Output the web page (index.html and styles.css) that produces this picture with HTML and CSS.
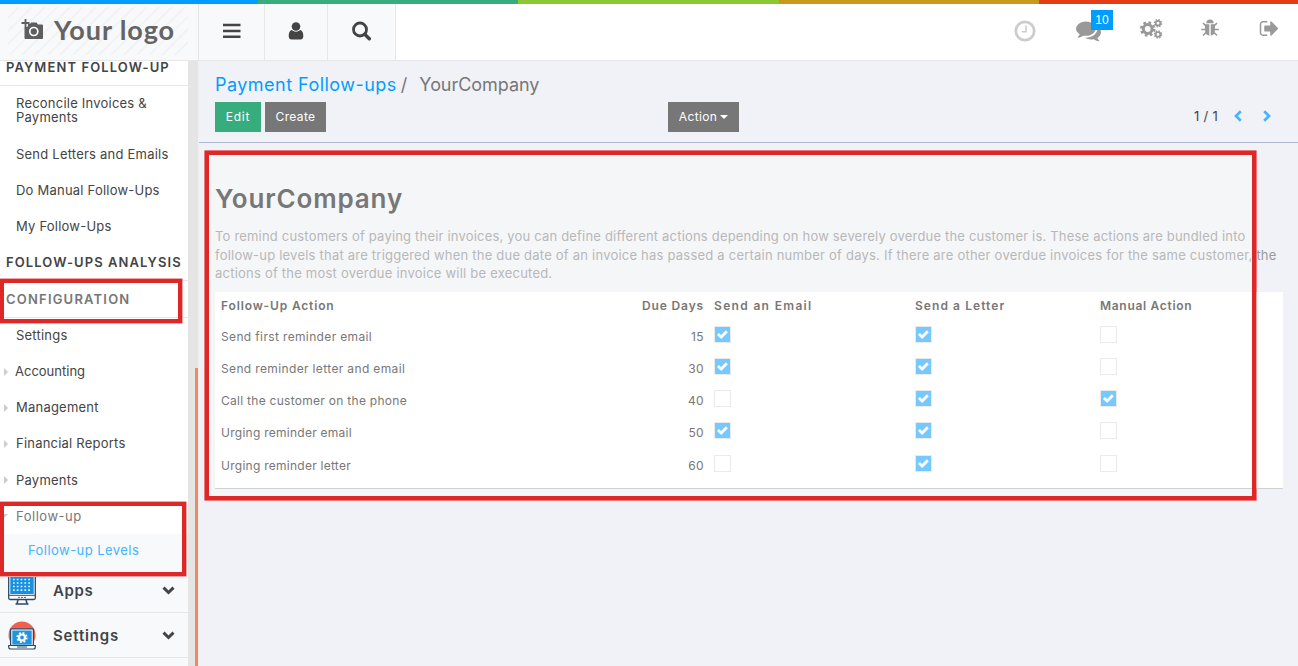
FILE: index.html
```
<!DOCTYPE html>
<html lang="en">
<head>
<meta charset="utf-8">
<title>Payment Follow-ups</title>
<link rel="stylesheet" href="styles.css">
</head>
<body>
<svg class="defs" width="0" height="0">
  <defs>
    <symbol id="chev" viewBox="0 0 13 9"><path d="M1.500 1.700 6.500 6.500l5-4.800" fill="none" stroke="#444" stroke-width="3"/></symbol>
    <symbol id="check" viewBox="0 0 15 15"><path d="M2.900 7 6.200 10.100 11.900 4.300" fill="none" stroke="#fff" stroke-width="2.800"/></symbol>
  </defs>
</svg>
<div class="stripe"><i class="s-blue"></i><i class="s-green"></i><i class="s-lime"></i><i class="s-gold"></i><i class="s-red"></i></div>
<header class="topbar">
  <div class="brand">
    <div class="logo">
      <svg width="23" height="22" viewBox="0 0 23 22"><path d="M3.500 8H6l1-1V5h2l1-1.500h5.500L17 5.500h4q1 0 1 1V19q0 1-1 1H4.500q-1 0-1-1z" fill="#5e5e5e"/><path d="M4.500 0v8M.5 4h8" stroke="#5e5e5e" stroke-width="1.800"/><circle cx="12.800" cy="12.500" r="4" fill="none" stroke="#fff" stroke-width="1.700"/></svg>
      <span>Your logo</span>
    </div>
  </div>
  <div class="tool t1"><svg width="18" height="16" viewBox="0 0 18 16"><path d="M0 2h17.500M0 8h17.500M0 13.700h17.500" stroke="#444" stroke-width="2.600"/></svg></div>
  <div class="tool t2"><svg width="16" height="18" viewBox="0 0 16 18"><circle cx="8" cy="4.500" r="4.300" fill="#444"/><path d="M3.700 8Q8 11.500 12.300 8q3 1 3 6 0 3.500-3 3.500H3.700q-3 0-3-3.500 0-5 3-6z" fill="#444"/></svg></div>
  <div class="tool t3"><svg width="20" height="20" viewBox="0 0 20 20"><circle cx="8" cy="8.500" r="6.500" fill="none" stroke="#444" stroke-width="2.800"/><path d="M12.700 13.200 17.300 17.800" stroke="#444" stroke-width="3.400" stroke-linecap="round"/></svg></div>
  <div class="systray">
    <svg class="i-clock" width="22" height="22" viewBox="0 0 22 22"><circle cx="11" cy="11" r="9.200" fill="none" stroke="#ccc" stroke-width="2.700"/><path d="M12 5.500v6.300H7.800" fill="none" stroke="#ccc" stroke-width="1.600"/></svg>
    <span class="chat">
      <svg width="25" height="25" viewBox="0 0 1792 1792"><path fill="#999" d="M1408 768q0 139-94 257t-256.500 186.500-353.500 68.500q-86 0-176-16-124 88-278 128-36 9-86 16h-3q-11 0-20.500-8t-11.500-21q-1-3-1-6.500t.5-6.500 2-6l2.500-5 3.500-5.500 4-5 4.500-5 4-4.500q5-6 23-25t26-29.500 22.500-29 25-38.500 20.500-44q-124-72-195-177t-71-224q0-139 94-257t256.500-186.500 353.500-68.500 353.500 68.500 256.500 186.500 94 257zm384 256q0 120-71 224.500t-195 176.500q10 24 20.500 44t25 38.500 22.500 29 26 29.500 23 25q1 1 4 4.500t4.500 5 4 5 3.500 5.500l2.500 5 2 6 .5 6.500-1 6.500q-3 14-13 22t-22 7q-50-7-86-16-154-40-278-128-90 16-176 16-271 0-472-132 58 4 88 4 161 0 309-45t264-129q125-92 192-212t67-254q0-77-23-152 129 71 204 178t75 230z"/></svg>
      <b class="badge">10</b>
    </span>
    <svg class="i-cogs" width="24" height="22" viewBox="0 0 24 22" fill="none" stroke="#999"><circle cx="7.700" cy="11" r="4.400" stroke-width="3"/><circle cx="7.700" cy="11" r="6.500" stroke-width="2.600" stroke-dasharray="2.600 2.505"/><circle cx="18" cy="5.200" r="2.300" stroke-width="1.800"/><circle cx="18" cy="5.200" r="3.600" stroke-width="1.300" stroke-dasharray="1.500 1.327"/><circle cx="18" cy="16.500" r="2.300" stroke-width="1.800"/><circle cx="18" cy="16.500" r="3.600" stroke-width="1.300" stroke-dasharray="1.500 1.327"/></svg>
    <svg class="i-bug" width="18" height="18" viewBox="0 0 18 18"><path d="M5.300 4.300a3.700 3.700 0 0 1 7.400 0z" fill="#999"/><path d="M4 5.200h4.300v11.500Q4 16 4 11zM14 5.200H9.700v11.500Q14 16 14 11z" fill="#999"/><path d="M4.500 6.500 2 4M13.500 6.500 16 4M4 10.500H.2M14 10.500h3.800M5 13.500 2 16.500M13 13.500l3 3" stroke="#999" stroke-width="1.700"/></svg>
    <svg class="i-out" width="21" height="21" viewBox="0 0 1792 1792"><path fill="#999" d="M704 1440q0 4 1 20t.5 26.500-3 23.500-10 19.500-20.500 6.500h-320q-119 0-203.500-84.500t-84.500-203.500v-704q0-119 84.500-203.500t203.500-84.500h320q13 0 22.500 9.500t9.500 22.500q0 4 1 20t.5 26.500-3 23.500-10 19.500-20.500 6.500h-320q-66 0-113 47t-47 113v704q0 66 47 113t113 47h312l11.500 1 11.500 3 8 5.500 7 9 2 13.500zm928-544q0 26-19 45l-544 544q-19 19-45 19t-45-19-19-45v-288h-448q-26 0-45-19t-19-45v-384q0-26 19-45t45-19h448v-288q0-26 19-45t45-19 45 19l544 544q19 19 19 45z"/></svg>
  </div>
</header>
<div class="shell">
  <nav class="side">
    <div class="sec first">PAYMENT FOLLOW-UP</div>
    <div class="item two">Reconcile Invoices &amp;<br>Payments</div>
    <div class="item">Send Letters and Emails</div>
    <div class="item">Do Manual Follow-Ups</div>
    <div class="item">My Follow-Ups</div>
    <div class="sec">FOLLOW-UPS ANALYSIS</div>
    <div class="sec conf">CONFIGURATION</div>
    <div class="item">Settings</div>
    <div class="item has acc">Accounting</div>
    <div class="item has">Management</div>
    <div class="item has">Financial Reports</div>
    <div class="item has pay">Payments</div>
    <div class="item open">Follow-up</div>
    <div class="item leaf">Follow-up Levels</div>
    <div class="app apps">
      <svg width="28" height="28" viewBox="0 0 28 28"><rect x=".7" y="-3" width="26.600" height="25.500" rx="1.500" fill="#fff" stroke="#2b4a66" stroke-width="1.300"/><rect x="2.300" y="-2" width="23.400" height="19" fill="#1690df"/><path d="M5 2.500h19M5 6h19M5 9.500h19M5 13.200h19" stroke="#e8f5ff" stroke-width="1.700" stroke-dasharray="1.700 2.100"/><path d="M1 18.300h26" stroke="#2b4a66"/><path d="M10 20.400h8" stroke="#567" stroke-dasharray="2 1"/><path d="M10 23 9 26.500M18 23l1 3.500M7.500 27h13" stroke="#2b4a66" stroke-width="1.500"/></svg>
      <span>Apps</span>
      <svg class="chev" width="13" height="9"><use href="#chev"/></svg>
    </div>
    <div class="app">
      <svg width="28" height="29" viewBox="0 0 28 29"><circle cx="14" cy="14" r="13.500" fill="#f0614f"/><rect x="2.600" y="7.800" width="22.800" height="17" rx="1.200" fill="#fff" stroke="#2b4a66" stroke-width="1.300"/><rect x="4.300" y="9.500" width="19.400" height="14.200" fill="#2094dc"/><path d="M.7 24.500h26.600v1.500q0 2-2 2H2.700q-2 0-2-2z" fill="#fff" stroke="#2b4a66" stroke-width="1.200"/><path d="M9 26h10" stroke="#789" stroke-width="1.500"/><circle cx="14" cy="16.500" r="3" fill="none" stroke="#fff" stroke-width="2.200"/><circle cx="14" cy="16.500" r="4.700" fill="none" stroke="#fff" stroke-width="1.800" stroke-dasharray="1.900 1.791"/></svg>
      <span class="w2">Settings</span>
      <svg class="chev" width="13" height="9"><use href="#chev"/></svg>
    </div>
    <div class="app"></div>
  </nav>
  <div class="rail"><div class="thumb"></div></div>
  <main class="main">
    <section class="control">
      <div class="crumbs"><a>Payment Follow-ups</a><span class="sep">/</span><span class="here">YourCompany</span></div>
      <div class="actions">
        <div class="left"><button class="btn edit">Edit</button><button class="btn create">Create</button></div>
        <button class="btn action">Action<i class="caret"></i></button>
        <div class="pager"><span>1 / 1</span>
          <svg width="8" height="12" viewBox="0 0 8 12"><path d="M6.800 1.200 2 6l4.800 4.800" fill="none" stroke="#44b4fc" stroke-width="2.700"/></svg>
          <svg class="next" width="8" height="12" viewBox="0 0 8 12"><path d="M1.200 1.200 6 6l-4.800 4.800" fill="none" stroke="#44b4fc" stroke-width="2.700"/></svg>
        </div>
      </div>
    </section>
    <section class="content">
      <h1>YourCompany</h1>
      <p><span class="lead">To remind customers of paying their invoices, you can define different actions depending on how severely overdue the customer is. These actions are bundled into</span><br>follow-up levels that are triggered when the due date of an invoice has passed a certain number of days. If there are other overdue invoices for the same customer, <span class="out">the</span><br>actions of the most overdue invoice will be executed.</p>
      <div class="table">
        <div class="row head"><span>Follow-Up Action</span><span class="num">Due Days</span><span class="wide">Send an Email</span><span class="mid">Send a Letter</span><span class="tight">Manual Action</span></div>
        <div class="row"><span>Send first reminder email</span><span class="num">15</span><span><i class="box on"><svg><use href="#check"/></svg></i></span><span><i class="box on"><svg><use href="#check"/></svg></i></span><span><i class="box"></i></span></div>
        <div class="row"><span>Send reminder letter and email</span><span class="num">30</span><span><i class="box on"><svg><use href="#check"/></svg></i></span><span><i class="box on"><svg><use href="#check"/></svg></i></span><span><i class="box"></i></span></div>
        <div class="row"><span class="call">Call the customer on the phone</span><span class="num">40</span><span><i class="box"></i></span><span><i class="box on"><svg><use href="#check"/></svg></i></span><span><i class="box on"><svg><use href="#check"/></svg></i></span></div>
        <div class="row"><span class="urge">Urging reminder email</span><span class="num">50</span><span><i class="box on"><svg><use href="#check"/></svg></i></span><span><i class="box on"><svg><use href="#check"/></svg></i></span><span><i class="box"></i></span></div>
        <div class="row last"><span class="urge">Urging reminder letter</span><span class="num">60</span><span><i class="box"></i></span><span><i class="box on"><svg><use href="#check"/></svg></i></span><span><i class="box"></i></span></div>
      </div>
    </section>
  </main>
</div>
<div class="frame f-content tint"></div>
<div class="frame f-content"></div>
<div class="frame f-conf"></div>
<div class="frame f-levels"></div>
</body>
</html>
```
FILE: styles.css
```
* { box-sizing: border-box; }
html { background: #f0f2f7; }
body { margin: 0; width: 1298px; height: 666px; overflow: hidden; position: relative; font: 13px/18px Inter, "Liberation Sans", sans-serif; color: #777; display: flex; flex-direction: column; }
svg { display: block; flex: none; }
.defs { position: absolute; }

.stripe { display: flex; height: 4px; flex: none; }
.stripe i { flex: 0 0 260px; }
.s-blue { background: #009dff; }
.stripe .s-blue { flex-basis: 258px; }
.s-green { background: #37ad7e; }
.s-lime { background: #8cc832; }
.stripe .s-lime { flex-basis: 261px; }
.s-gold { background: #c8991c; }
.s-red { background: #e43c14; }

.topbar { display: flex; flex: none; height: 57px; background: #fff; border-bottom: 1px solid #e7e7e7; }
.brand { width: 199px; padding: 3px 10px 5px 8px; background: #f8f9fb; border-right: 1px solid #e7e7e7; }
.logo { height: 48px; display: flex; padding: 12px 0 0 13px; gap: 10px; background: repeating-linear-gradient(135deg, #f8f9fb 0 7px, #f2f3f5 7px 9px); font: 700 27px/30px Lato, sans-serif; letter-spacing: 0.900px; color: #646464; }
.logo span { margin-top: -4px; white-space: nowrap; }
.tool { display: flex; background: #f8f9fb; border-right: 1px solid #e7e7e7; align-items: center; justify-content: center; padding-bottom: 2px; }
.t1 { width: 66px; }
.t2 { width: 63px; }
.t3 { width: 68px; }
.systray { display: flex; align-items: flex-start; margin-left: 618px; }
.i-clock { margin-top: 16px; }
.chat { position: relative; margin: 14px 0 0 40px; }
.badge { position: absolute; left: 15px; top: -8px; width: 22px; height: 20px; background: #009dff; color: #fff; font: 12px/20px "Liberation Sans", Arial, sans-serif; text-align: center; }
.i-cogs { margin: 14px 0 0 39px; }
.i-bug { margin: 15px 0 0 37px; }
.i-out { margin: 14px 0 0 40px; }

.shell { display: flex; flex: 1; min-height: 0; }
.side { width: 188px; background: #fff; overflow: hidden; color: #444; }
.sec { height: 36px; padding-left: 6px; border-bottom: 1px solid #e7e7e7; font-weight: 600; line-height: 35px; letter-spacing: 1.080px; white-space: nowrap; }
.first { height: 25px; line-height: 13px; letter-spacing: 1.100px; }
.conf { height: 37px; line-height: 37px; color: #777; letter-spacing: 1.200px; }
.item { height: 36.200px; line-height: 36px; padding-left: 16px; letter-spacing: 0.220px; white-space: nowrap; position: relative; }
.two { height: 50px; line-height: 14px; padding-top: 10px; }
.conf ~ .item { line-height: 34px; }
.conf ~ .pay { line-height: 36px; }
.has::before { content: ""; position: absolute; left: 4px; top: 14px; border: 4px solid transparent; border-left-color: #ccc; border-right: 0; }
.acc { letter-spacing: 0; padding-left: 15px; }
.side .open { height: 35px; color: #777; letter-spacing: 0.520px; }
.open::before { content: ""; position: absolute; left: 0; top: 15px; border: 4px solid transparent; border-top-color: #ccc; border-bottom: 0; }
.side .leaf { height: 34px; line-height: 32px; padding-left: 28px; background: #f8f9fb; color: #44b4fc; letter-spacing: 0.450px; }
.app { display: flex; align-items: center; height: 45px; padding: 2px 13px 0 8px; background: #f8f9fb; border-bottom: 1px solid #e7e7e7; font-size: 15px; font-weight: 600; letter-spacing: 0.600px; }
.app span { margin-left: 17px; }
.app .w2 { letter-spacing: 0.830px; }
.app .chev { margin-left: auto; }
.rail { width: 11px; background: #e5e5e5; border-right: 1px solid #f0f0f0; padding: 307px 0 0 7px; }
.thumb { width: 3px; height: 100%; background: #ee8a64; }

.main { flex: 1; min-width: 0; }
.control { height: 82px; padding: 12px 27px 0 16px; border-bottom: 1px solid #afb9cf; }
.crumbs { height: 29px; font-size: 18px; line-height: 23px; display: flex; white-space: nowrap; }
.crumbs a { color: #009dff; letter-spacing: 0.470px; }
.sep { margin-left: 4px; }
.here { margin-left: 12px; letter-spacing: -0.050px; }
.actions { display: flex; align-items: center; height: 30px; }
.left { display: flex; gap: 4px; width: 453px; }
.btn { height: 30px; border: 0; padding: 0; background: #777; color: #fff; font: 12px/30px Inter, sans-serif; letter-spacing: 0.350px; display: flex; align-items: center; justify-content: center; }
.edit { width: 46px; background: #37ad7e; letter-spacing: 0.800px; }
.create { width: 61px; }
.action { width: 71px; gap: 3px; }
.caret { border: 4px solid transparent; border-top-color: #fff; border-bottom: 0; }
.pager { display: flex; align-items: center; margin-left: auto; color: #444; padding-bottom: 2px; }
.pager span { margin-right: 16px; letter-spacing: 0.300px; }
.pager .next { margin-left: 21px; }

.content { padding: 39px 15px 0 16px; }
h1 { margin: 0 0 11px; font-size: 26px; line-height: 34px; font-weight: 600; letter-spacing: 0.860px; }
p { margin: 0; color: #b8b8b8; line-height: 18.500px; letter-spacing: 0.220px; white-space: nowrap; }
.lead { letter-spacing: 0.190px; }
.out { color: #999; }
.table { height: 197px; margin-top: 9px; background: #fff; border-bottom: 1px solid #d0d0d0; font-size: 12px; letter-spacing: 0.360px; }
.row { display: grid; grid-template-columns: 380px 109px 201px 185px 1fr; padding-left: 6px; height: 32.200px; line-height: 31px; white-space: nowrap; color: #777; }
.head { height: 29px; line-height: 28px; font-weight: 600; letter-spacing: 0.850px; }
.num { text-align: right; padding-right: 6px; }
.row > span:nth-child(n+3) { padding-left: 4px; }
.last { padding-top: 1px; }
.call { letter-spacing: 0.280px; }
.urge { letter-spacing: 0.260px; }
.head .wide { letter-spacing: 1.330px; }
.head .mid { letter-spacing: 1.070px; }
.head .tight { letter-spacing: 0.700px; }
.box { display: block; width: 17px; height: 17px; margin-top: 5px; border: 1px solid #eaeaea; background: #fff; }
.on { background: #74caff; }
.box svg { width: 15px; height: 15px; }

.frame { position: absolute; border: 4px solid #de2828; box-shadow: 0 0 0 0.500px #e65050; pointer-events: none; }
.f-content { left: 205px; top: 151px; width: 1051px; height: 349px; }
.tint { background: #f5f6f8; z-index: -1; }
.f-conf { left: 0; top: 279px; width: 182px; height: 44px; }
.f-levels { left: 0; top: 502px; width: 186px; height: 74px; }
```
